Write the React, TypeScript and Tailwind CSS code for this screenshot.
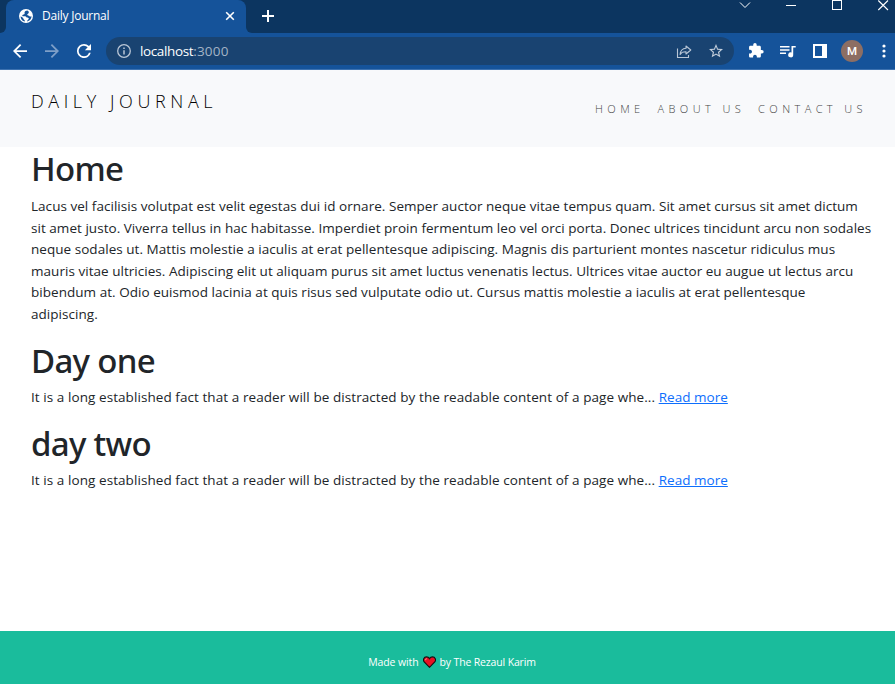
const intro = [
  'Lacus vel facilisis volutpat est velit egestas dui id ornare. Semper auctor neque vitae tempus quam. Sit amet cursus sit amet dictum',
  'sit amet justo. Viverra tellus in hac habitasse. Imperdiet proin fermentum leo vel orci porta. Donec ultrices tincidunt arcu non sodales',
  'neque sodales ut. Mattis molestie a iaculis at erat pellentesque adipiscing. Magnis dis parturient montes nascetur ridiculus mus',
  'mauris vitae ultricies. Adipiscing elit ut aliquam purus sit amet luctus venenatis lectus. Ultrices vitae auctor eu augue ut lectus arcu',
  'bibendum at. Odio euismod lacinia at quis risus sed vulputate odio ut. Cursus mattis molestie a iaculis at erat pellentesque',
  'adipiscing.',
];

const excerpt = 'It is a long established fact that a reader will be distracted by the readable content of a page whe...';

function TabStrip() {
  return (
    <div className="flex h-[33px] items-start bg-[#0c3560]">
      <div className="flex h-[33px] w-[6px] bg-[#15539a]">
        <div className="h-full w-full rounded-br-[6px] bg-[#0c3560]" />
      </div>
      <div className="flex h-[33px] w-[240px] items-center rounded-t-[8px] bg-[#15539a] pl-[13px] pr-[11px]">
        <svg className="-mt-px h-[14px] w-[14px] shrink-0" viewBox="0 0 14 14">
          <circle cx="7" cy="7" r="7" fill="white" />
          <path fill="#15539a" d="M8.300 1.500C6.900 1.600 6 2.300 5.600 3.200c-.3.700.3 1.100 0 1.700-.4.600-1.600.4-2.100 1-.5.700-.1 1.300.9 1.300 1.300 0 2.200-.1 2.700.6.400.7 1 .9 1.900.9.900.1 1 .9.500 1.500-.6.700-1.300 1-1.500 2.300 2.700-.5 4.500-2.600 4.600-5.200-.9.500-1.800.4-2.300-.300-.5-.7-1.600-.4-2-1.100-.4-.9.9-1.200 1.400-2 .4-.9-.1-1.800-1.400-2.400zM1.500 7.400c.2 2.700 1.900 4.600 4.400 5.100.1-1.300-.5-1.700-1.100-2.100-.4-.3-.3-.9-.7-1.400-.7-.9-1.500-1.400-2.600-1.600z" />
        </svg>
        <span className="ml-[9px] mt-[-1px] whitespace-nowrap text-[12px] leading-4 tracking-[-0.23px] text-white">Daily Journal</span>
        <svg className="-mt-px ml-auto h-[10px] w-[10px]" viewBox="0 0 10 10" stroke="white" strokeWidth="1.6">
          <path d="M1.200 1.200l7.600 7.600M8.800 1.200L1.200 8.800" />
        </svg>
      </div>
      <div className="flex h-[33px] w-[6px] bg-[#15539a]">
        <div className="h-full w-full rounded-bl-[6px] bg-[#0c3560]" />
      </div>
      <svg className="ml-[10px] mt-[10px] h-3 w-3" viewBox="0 0 12 12" fill="white">
        <path d="M5 0h2v5h5v2H7v5H5V7H0V5h5z" />
      </svg>
      <svg className="ml-auto h-[12px] w-[156px] shrink-0" viewBox="0 0 156 12" fill="none" stroke="white">
        <path d="M1 2.500l5 5 5-5" strokeWidth="1" />
        <path d="M47 5.500h10" shapeRendering="crispEdges" />
        <path d="M93.500.500h9v9h-9z" shapeRendering="crispEdges" />
        <path d="M139.300.500l9.700 9.500M149 .500L139.300 10" strokeWidth="1.100" />
      </svg>
    </div>
  );
}

function Toolbar() {
  return (
    <div className="flex h-[37px] items-center border-b border-[#3d72b0] bg-[#15539a] pl-[13px] text-white">
      <svg className="h-[14px] w-[14px]" viewBox="4 4 16 16" fill="white">
        <path d="M20 11H7.830l5.590-5.590L12 4l-8 8 8 8 1.410-1.410L7.830 13H20z" />
      </svg>
      <svg className="ml-[18px] h-[14px] w-[14px]" viewBox="4 4 16 16" fill="#7e9fc8">
        <path d="M12 4l-1.410 1.410L16.170 11H4v2h12.170l-5.580 5.590L12 20l8-8z" />
      </svg>
      <svg className="ml-[18px] h-[14px] w-[14px]" viewBox="4 4 16 16" fill="white">
        <path d="M17.650 6.350A7.958 7.958 0 0 0 12 4a8 8 0 1 0 7.730 10h-2.080A5.990 5.990 0 0 1 12 18a6 6 0 1 1 4.220-10.220L13 11h7V4z" />
      </svg>
      <div className="ml-[15px] flex h-[28px] w-[628px] items-center rounded-full bg-[#194371] pl-[11px] pr-[11px]">
        <svg className="h-[14px] w-[14px]" viewBox="0 0 14 14" fill="none" stroke="#b9c6d6">
          <circle cx="7" cy="7" r="6.300" strokeWidth="1.300" />
          <path d="M7 6.200v4.300M7 3.500v1.500" strokeWidth="1.500" />
        </svg>
        <span className="ml-[9px] whitespace-nowrap text-[13.5px] leading-5 tracking-[-0.38px]">localhost</span>
        <span className="whitespace-nowrap text-[13.5px] leading-5 tracking-[0.2px] text-[#a3b4c6]">:3000</span>
        <svg className="ml-auto h-[15px] w-[16px]" viewBox="0 0 16 15" fill="none" stroke="#b9c6d6" strokeWidth="1.100">
          <path d="M1.500 4.500v9h11v-2.500" />
          <path d="M10 2l4.800 4-4.800 4V7.800C7 7.700 5.200 8.500 4.100 10.500 4.400 7 6.300 4.600 10 4.300z" strokeLinejoin="round" />
        </svg>
        <svg className="ml-[17px] h-[14px] w-[14px]" viewBox="2 2 20 20" fill="#c3cedb">
          <path d="M22 9.240l-7.190-.620L12 2 9.190 8.630 2 9.240l5.460 4.730L5.820 21 12 17.270 18.180 21l-1.630-7.030L22 9.240zM12 15.400l-3.760 2.270 1-4.280-3.320-2.880 4.380-.380L12 6.100l1.710 4.040 4.380.380-3.320 2.880 1 4.280L12 15.400z" />
        </svg>
      </div>
      <svg className="ml-[14px] h-[16px] w-[16px]" viewBox="0.500 1 23 23" fill="white">
        <path d="M20.500 11H19V7c0-1.100-.900-2-2-2h-4V3.500a2.500 2.500 0 0 0-5 0V5H4c-1.100 0-1.990.900-1.990 2v3.800H3.500c1.490 0 2.700 1.210 2.700 2.700s-1.210 2.700-2.700 2.700H2V20c0 1.100.900 2 2 2h3.800v-1.500c0-1.490 1.210-2.700 2.700-2.700s2.700 1.210 2.700 2.700V22H17c1.100 0 2-.900 2-2v-4h1.500a2.500 2.500 0 0 0 0-5z" />
      </svg>
      <svg className="ml-4 h-[14px] w-[17px]" viewBox="0 0 17 14" fill="white">
        <path d="M0 2h9.500v1.400H0zM0 5.300h9.500v1.400H0zM0 8.600h6v1.400H0zM11.500 2H15.700v1.600H13.200v7.200a2.500 2.500 0 1 1-1.700-2.300z" />
      </svg>
      <svg className="ml-4 h-[14px] w-[14px]" viewBox="0 0 14 14">
        <path d="M1 1h12v12H1z" fill="none" stroke="white" strokeWidth="2" />
        <path d="M9 1h4v12H9z" fill="white" />
      </svg>
      <div className="ml-[14px] flex h-[22px] w-[22px] items-center justify-center rounded-full bg-[#8d6e63] pt-px font-[Roboto] text-[11.5px] font-medium leading-none">M</div>
      <svg className="ml-[19px] h-[14px] w-[4px]" viewBox="0 0 4 14" fill="white">
        <circle cx="2" cy="2" r="1.600" />
        <circle cx="2" cy="7" r="1.600" />
        <circle cx="2" cy="12" r="1.600" />
      </svg>
    </div>
  );
}

function Heading({ children }: { children: string }) {
  return (
    <h1 className="h-[43px] font-['Noto_Sans',sans-serif] text-[33px] font-medium leading-[43px] tracking-[-0.7px] text-[#212529]">
      {children}
    </h1>
  );
}

function Post({ title }: { title: string }) {
  return (
    <article className="mb-[11px] h-[72px]">
      <Heading>{title}</Heading>
      <p className="mt-[5px] whitespace-nowrap text-[13.5px] leading-[21.6px] tracking-[0.07px]">
        {excerpt}{' '}
        <a href="#" className="tracking-[0.03px] text-[#0d6efd] underline">Read more</a>
      </p>
    </article>
  );
}

export default function App() {
  return (
    <div className="flex h-[684px] w-[895px] flex-col overflow-hidden bg-white font-['Open_Sans','Noto_Sans',sans-serif] text-[#212529]">
      <TabStrip />
      <Toolbar />
      <header className="flex h-[77px] shrink-0 items-start justify-between bg-[#f8f9fb] pl-[31px] pr-[28px]">
        <a href="#" className="mt-[19px] whitespace-nowrap text-[18px] font-light leading-6 tracking-[4.6px] text-black">DAILY JOURNAL</a>
        <nav className="mt-[31px] flex gap-[13px] whitespace-nowrap text-[11px] font-light leading-4 tracking-[4.4px] text-[#444]">
          <a href="#">HOME</a>
          <a href="#">ABOUT US</a>
          <a href="#">CONTACT US</a>
        </nav>
      </header>
      <main className="flex-1 pl-[31px]">
        <Heading>Home</Heading>
        <p className="mb-[13px] mt-[6px] whitespace-nowrap text-[13.5px] leading-[21.6px] tracking-[0.038px]">
          {intro.map((line) => (
            <span key={line} className="block">{line}</span>
          ))}
        </p>
        <Post title="Day one" />
        <Post title="day two" />
      </main>
      <footer className="flex h-[53px] shrink-0 items-center justify-center bg-[#1abc9c] pl-[9px] pt-[9px] text-[10.5px] leading-4 text-white">
        <span className="tracking-[-0.1px]">Made with</span>
        <svg className="mx-[4px] h-[12px] w-[13px]" viewBox="0 0 13 12">
          <path d="M6.500 11.300L1.200 6C-.4 3.900.8.9 3.500.9c1.400 0 2.400.7 3 1.700.6-1 1.600-1.700 3-1.700 2.700 0 3.900 3 2.300 5.100z" fill="#e81224" stroke="#111" strokeWidth="1.100" />
          <path d="M2.500 4.200c0-1 .5-1.500 1.300-1.600" fill="none" stroke="#ff8b93" />
        </svg>
        <span className="tracking-[-0.15px]">by The Rezaul Karim</span>
      </footer>
    </div>
  );
}
